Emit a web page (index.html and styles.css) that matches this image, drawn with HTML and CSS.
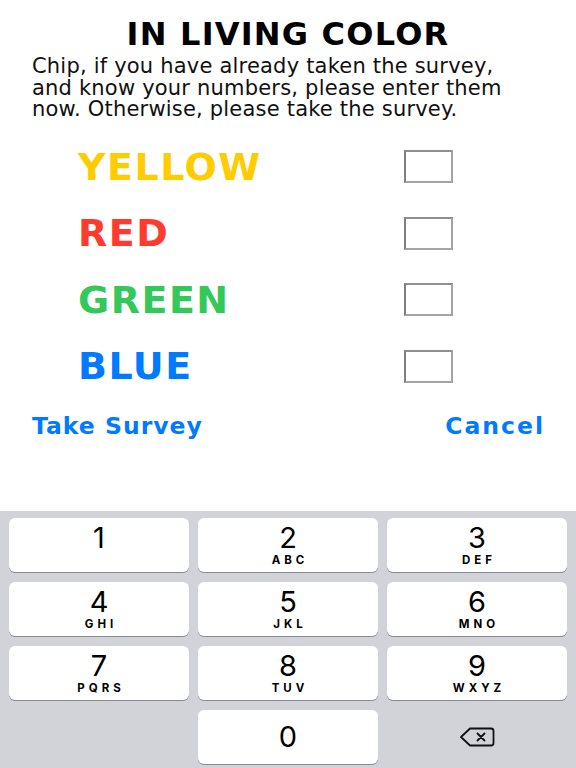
FILE: index.html
```html
<!DOCTYPE html>
<html lang="en">
<head>
    <meta charset="UTF-8">
    <meta name="viewport" content="width=device-width, initial-scale=1.0">
    <title>In Living Color</title>
    <link rel="stylesheet" href="styles.css">
</head>
<body>
    <div class="screen">
        <h1 class="title">IN LIVING COLOR</h1>
        <p class="intro">
            Chip, if you have already taken the survey,<br>
            and know your numbers, please enter them<br>
            now. Otherwise, please take the survey.
        </p>

        <div class="colors">
            <div class="color-name yellow">YELLOW</div>
            <input class="score" type="text" aria-label="Yellow score">
            <div class="color-name red">RED</div>
            <input class="score" type="text" aria-label="Red score">
            <div class="color-name green">GREEN</div>
            <input class="score" type="text" aria-label="Green score">
            <div class="color-name blue">BLUE</div>
            <input class="score" type="text" aria-label="Blue score">
        </div>

        <div class="actions">
            <button class="link-btn">Take Survey</button>
            <button class="link-btn cancel">Cancel</button>
        </div>

        <div class="keypad">
            <div class="key solo"><span class="digit">1</span></div>
            <div class="key"><span class="digit">2</span><span class="letters">ABC</span></div>
            <div class="key"><span class="digit">3</span><span class="letters">DEF</span></div>
            <div class="key"><span class="digit">4</span><span class="letters">GHI</span></div>
            <div class="key"><span class="digit">5</span><span class="letters">JKL</span></div>
            <div class="key"><span class="digit">6</span><span class="letters">MNO</span></div>
            <div class="key"><span class="digit">7</span><span class="letters">PQRS</span></div>
            <div class="key"><span class="digit">8</span><span class="letters">TUV</span></div>
            <div class="key"><span class="digit">9</span><span class="letters">WXYZ</span></div>
            <div class="key blank"></div>
            <div class="key zero"><span class="digit">0</span></div>
            <div class="key blank backspace">
                <svg width="36" height="20" viewBox="0 0 36 20" fill="none" stroke="#111" stroke-width="1.8" stroke-linejoin="round" stroke-linecap="round">
                    <path d="M11 1.5 H32 a2.5 2.5 0 0 1 2.5 2.5 V16 a2.5 2.5 0 0 1 -2.5 2.5 H11 L2 10 Z"/>
                    <path d="M18.5 6.5 L25.5 13.5 M25.5 6.5 L18.5 13.5"/>
                </svg>
            </div>
        </div>
    </div>
</body>
</html>
```

FILE: styles.css
```css
html, body {
    margin: 0;
    padding: 0;
    background: #fff;
}
.screen {
    width: 576px;
    height: 768px;
    display: flex;
    flex-direction: column;
    font-family: 'DejaVu Sans', sans-serif;
    color: #000;
    overflow: hidden;
}
.title {
    margin: 15px 0 0 0;
    text-align: center;
    font-size: 32px;
    letter-spacing: 1.2px;
    line-height: 38px;
    font-weight: bold;
}
.intro {
    margin: 3px 32px 0 32px;
    font-size: 21px;
    letter-spacing: 0.2px;
    line-height: 21.5px;
    color: #111;
}
.colors {
    display: grid;
    grid-template-columns: 326px 49px;
    grid-auto-rows: 66.5px;
    align-items: center;
    margin-top: 13px;
    padding-left: 78px;
}
.color-name {
    font-weight: bold;
    font-size: 38px;
    letter-spacing: 1.5px;
    line-height: 40px;
}
.yellow { color: #ffcc00; }
.red { color: #ff3b30; }
.green { color: #34c759; }
.blue { color: #007aff; }
.score {
    box-sizing: border-box;
    width: 49px;
    height: 33px;
    margin: 0;
    padding: 0;
    background: #fff;
    border: 2px solid #a4a4a4;
    border-top-color: #8f8f8f;
    border-left-color: #7f7f7f;
}
.actions {
    display: flex;
    justify-content: space-between;
    padding: 0 33px 0 32px;
    margin-top: 13px;
}
.link-btn {
    background: none;
    border: none;
    padding: 0;
    font-family: 'DejaVu Sans', sans-serif;
    font-weight: bold;
    font-size: 23.5px;
    letter-spacing: 1px;
    line-height: 26px;
    color: #007aff;
}
.link-btn.cancel {
    letter-spacing: 2px;
    margin-right: -2px;
}
.keypad {
    margin-top: auto;
    background: #d1d3d9;
    display: grid;
    grid-template-columns: repeat(3, 180px);
    grid-auto-rows: 54px;
    gap: 10px 9px;
    padding: 7px 9px 4px 9px;
    font-family: Inter, 'Liberation Sans', sans-serif;
}
.key {
    background: #fff;
    border-radius: 6px;
    box-shadow: 0 1px 0 #8a8b8e;
    display: flex;
    flex-direction: column;
    align-items: center;
    padding-top: 4px;
    box-sizing: border-box;
}
.digit {
    font-size: 29px;
    line-height: 32px;
    font-weight: 400;
}
.letters {
    font-size: 11.5px;
    font-weight: 700;
    letter-spacing: 4px;
    margin-right: -4px;
    line-height: 12px;
}
.key.zero {
    justify-content: center;
    padding-top: 0;
}
.key.blank {
    background: none;
    box-shadow: none;
}
.backspace {
    justify-content: center;
    padding-top: 0;
}
```
